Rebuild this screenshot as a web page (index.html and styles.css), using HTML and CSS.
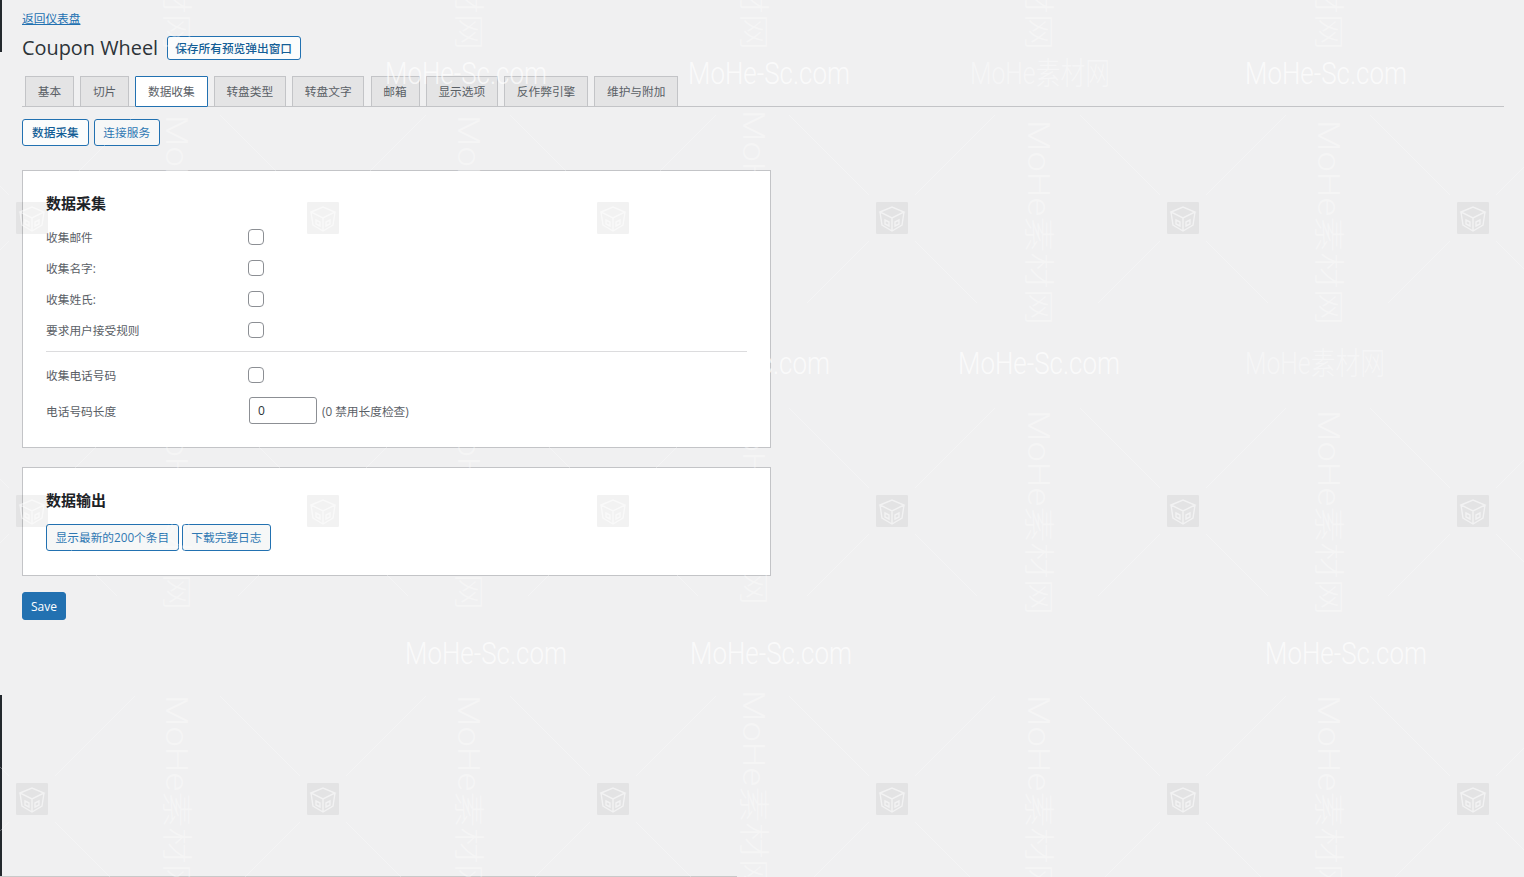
FILE: index.html
```html
<!DOCTYPE html>
<html lang="zh-CN">
<head>
<meta charset="utf-8">
<title>Coupon Wheel</title>
<link rel="stylesheet" href="styles.css">
</head>
<body>
<main class="page">
  <a class="back" href="#">返回仪表盘</a>
  <div class="title-row">
    <h1>Coupon Wheel</h1>
    <a class="btn btn-strong" href="#">保存所有预览弹出窗口</a>
  </div>
  <nav class="tabs">
    <a class="tab" href="#">基本</a>
    <a class="tab" href="#">切片</a>
    <a class="tab active" href="#">数据收集</a>
    <a class="tab" href="#">转盘类型</a>
    <a class="tab" href="#">转盘文字</a>
    <a class="tab" href="#">邮箱</a>
    <a class="tab" href="#">显示选项</a>
    <a class="tab" href="#">反作弊引擎</a>
    <a class="tab" href="#">维护与附加</a>
  </nav>
  <div class="subtabs">
    <a class="btn btn-strong" href="#">数据采集</a>
    <a class="btn" href="#">连接服务</a>
  </div>

  <section class="card card-collect">
    <h2>数据采集</h2>
    <div class="row"><label>收集邮件</label><input type="checkbox"></div>
    <div class="row"><label>收集名字:</label><input type="checkbox"></div>
    <div class="row"><label>收集姓氏:</label><input type="checkbox"></div>
    <div class="row"><label>要求用户接受规则</label><input type="checkbox"></div>
    <hr>
    <div class="row"><label>收集电话号码</label><input type="checkbox"></div>
    <div class="row row-input">
      <label>电话号码长度</label>
      <div class="field"><input class="num" type="text" value="0"><span class="hint">(0 禁用长度检查)</span></div>
    </div>
  </section>

  <section class="card card-output">
    <h2>数据输出</h2>
    <div class="actions">
      <a class="btn" href="#">显示最新的200个条目</a>
      <a class="btn" href="#">下载完整日志</a>
    </div>
  </section>

  <button class="save" type="button">Save</button>
</main>

<svg class="overlay" width="1524" height="877" viewBox="0 0 1524 877" aria-hidden="true">
  <defs>
    <g id="mark">
      <path class="diag" d="M23 -23L103 -103M-23 -23L-103 -103M23 23L85 85M-23 23L-85 85"/>
      <rect class="cube-bg" x="-16" y="-16" width="32" height="32" rx="1"/>
      <path class="cube-line" d="M-12 -6L0 -11L12 -6L0 0ZM-12 -6L-10 7L0 13L10 7L12 -6M0 0V13"/>
      <path class="cube-line" d="M-7 2L-3 4L-3 8L-7 6ZM7 2L3 4L3 8L7 6Z"/>
    </g>
  </defs>
  <rect class="edge" x="0" y="0" width="2" height="52"/>
  <rect class="edge" x="0" y="695" width="2" height="182"/>
  <rect class="floor" x="0" y="876" width="737" height="1"/>

  <use href="#mark" x="32" y="218"/><use href="#mark" x="323" y="218"/><use href="#mark" x="613" y="218"/>
  <use href="#mark" x="892" y="218"/><use href="#mark" x="1183" y="218"/><use href="#mark" x="1473" y="218"/>
  <use href="#mark" x="32" y="511"/><use href="#mark" x="323" y="511"/><use href="#mark" x="613" y="511"/>
  <use href="#mark" x="892" y="511"/><use href="#mark" x="1183" y="511"/><use href="#mark" x="1473" y="511"/>
  <use href="#mark" x="32" y="799"/><use href="#mark" x="323" y="799"/><use href="#mark" x="613" y="799"/>
  <use href="#mark" x="892" y="799"/><use href="#mark" x="1183" y="799"/><use href="#mark" x="1473" y="799"/>

  <text class="wm" x="385" y="84" textLength="162" lengthAdjust="spacingAndGlyphs">MoHe-Sc.com</text>
  <text class="wm" x="688" y="84" textLength="162" lengthAdjust="spacingAndGlyphs">MoHe-Sc.com</text>
  <text class="wm wm-soft" x="970" y="84" textLength="140" lengthAdjust="spacingAndGlyphs">MoHe素材网</text>
  <text class="wm" x="1245" y="84" textLength="162" lengthAdjust="spacingAndGlyphs">MoHe-Sc.com</text>
  <text class="wm" x="668" y="374" textLength="162" lengthAdjust="spacingAndGlyphs">MoHe-Sc.com</text>
  <text class="wm" x="958" y="374" textLength="162" lengthAdjust="spacingAndGlyphs">MoHe-Sc.com</text>
  <text class="wm wm-soft" x="1245" y="374" textLength="140" lengthAdjust="spacingAndGlyphs">MoHe素材网</text>
  <text class="wm" x="405" y="664" textLength="162" lengthAdjust="spacingAndGlyphs">MoHe-Sc.com</text>
  <text class="wm" x="690" y="664" textLength="162" lengthAdjust="spacingAndGlyphs">MoHe-Sc.com</text>
  <text class="wm" x="1265" y="664" textLength="162" lengthAdjust="spacingAndGlyphs">MoHe-Sc.com</text>

  <text class="wm wm-v" transform="translate(166 -155) rotate(90)" textLength="205" lengthAdjust="spacingAndGlyphs">MoHe素材网</text>
  <text class="wm wm-v" transform="translate(166 115) rotate(90)" textLength="205" lengthAdjust="spacingAndGlyphs">MoHe素材网</text>
  <text class="wm wm-v" transform="translate(166 405) rotate(90)" textLength="205" lengthAdjust="spacingAndGlyphs">MoHe素材网</text>
  <text class="wm wm-v" transform="translate(166 695) rotate(90)" textLength="205" lengthAdjust="spacingAndGlyphs">MoHe素材网</text>
  <text class="wm wm-v" transform="translate(458 -155) rotate(90)" textLength="205" lengthAdjust="spacingAndGlyphs">MoHe素材网</text>
  <text class="wm wm-v" transform="translate(458 115) rotate(90)" textLength="205" lengthAdjust="spacingAndGlyphs">MoHe素材网</text>
  <text class="wm wm-v" transform="translate(458 405) rotate(90)" textLength="205" lengthAdjust="spacingAndGlyphs">MoHe素材网</text>
  <text class="wm wm-v" transform="translate(458 695) rotate(90)" textLength="205" lengthAdjust="spacingAndGlyphs">MoHe素材网</text>
  <text class="wm wm-v" transform="translate(743 -155) rotate(90)" textLength="205" lengthAdjust="spacingAndGlyphs">MoHe素材网</text>
  <text class="wm wm-v" transform="translate(743 110) rotate(90)" textLength="205" lengthAdjust="spacingAndGlyphs">MoHe素材网</text>
  <text class="wm wm-v" transform="translate(743 400) rotate(90)" textLength="205" lengthAdjust="spacingAndGlyphs">MoHe素材网</text>
  <text class="wm wm-v" transform="translate(743 690) rotate(90)" textLength="205" lengthAdjust="spacingAndGlyphs">MoHe素材网</text>
  <text class="wm wm-v" transform="translate(1028 -155) rotate(90)" textLength="205" lengthAdjust="spacingAndGlyphs">MoHe素材网</text>
  <text class="wm wm-v" transform="translate(1028 120) rotate(90)" textLength="205" lengthAdjust="spacingAndGlyphs">MoHe素材网</text>
  <text class="wm wm-v" transform="translate(1028 410) rotate(90)" textLength="205" lengthAdjust="spacingAndGlyphs">MoHe素材网</text>
  <text class="wm wm-v" transform="translate(1028 695) rotate(90)" textLength="205" lengthAdjust="spacingAndGlyphs">MoHe素材网</text>
  <text class="wm wm-v" transform="translate(1318 -155) rotate(90)" textLength="205" lengthAdjust="spacingAndGlyphs">MoHe素材网</text>
  <text class="wm wm-v" transform="translate(1318 120) rotate(90)" textLength="205" lengthAdjust="spacingAndGlyphs">MoHe素材网</text>
  <text class="wm wm-v" transform="translate(1318 410) rotate(90)" textLength="205" lengthAdjust="spacingAndGlyphs">MoHe素材网</text>
  <text class="wm wm-v" transform="translate(1318 695) rotate(90)" textLength="205" lengthAdjust="spacingAndGlyphs">MoHe素材网</text>
</svg>
</body>
</html>
```
FILE: styles.css
```css
* { box-sizing: border-box; }

html, body { height: 100%; }

body {
  margin: 0;
  background: #f0f0f1;
  color: #5a6066;
  font-family: "Open Sans", "Noto Sans CJK SC", sans-serif;
  font-size: 11.7px;
  overflow: hidden;
}

.page {
  padding: 10px 20px 0 22px;
}

.back {
  display: block;
  height: 16px;
  line-height: 16px;
  color: #2271b1;
}

.title-row {
  display: flex;
  align-items: center;
  gap: 8.5px;
  margin-top: 10px;
  height: 24px;
}

h1 {
  margin: 0;
  font-size: 19.9px;
  font-weight: 400;
  line-height: 24px;
  color: #2c3338;
}

.btn {
  display: inline-flex;
  align-items: center;
  height: 27px;
  padding: 0 9px 2px;
  border: 1px solid #2271b1;
  border-radius: 3px;
  background: #f6f7f7;
  color: #2f78b3;
  white-space: nowrap;
  text-decoration: none;
}

.btn-strong {
  font-weight: 500;
  color: #135e96;
  background: #fbfcfc;
}

.title-row .btn {
  height: 24px;
  padding: 0 7.5px 2px;
}

.tabs {
  display: flex;
  gap: 6.1px;
  margin-top: 16px;
  height: 31px;
  padding-left: 3px;
  width: 1482px;
  border-bottom: 1px solid #c3c4c7;
}

.tab {
  display: flex;
  align-items: center;
  height: 31px;
  padding: 0 11.8px 2px;
  border: 1px solid #c3c4c7;
  background: #e4e4e5;
  color: #5a6066;
  text-decoration: none;
  white-space: nowrap;
}

.tab.active {
  background: #fff;
  border: 1px solid #2271b1;
  border-radius: 1px;
}

.subtabs {
  display: flex;
  gap: 5px;
  margin-top: 12px;
}

.subtabs .btn:last-child {
  padding: 0 8.6px 2px;
}

.card {
  width: 749px;
  padding: 0 23px;
  background: #fff;
  border: 1px solid #c3c4c7;
}

.card-collect {
  height: 278px;
  margin-top: 24px;
}

.card-output {
  height: 109px;
  margin-top: 19px;
}

h2 {
  margin: 21px 0 0;
  font-size: 15px;
  line-height: 22px;
  font-weight: 700;
  color: #1d2327;
}

.row {
  display: grid;
  grid-template-columns: 202px 1fr;
  align-items: center;
  height: 31px;
}

.card-collect h2 + .row {
  margin-top: 7px;
}

.row label {
  color: #5a6066;
}

input[type="checkbox"] {
  appearance: none;
  width: 16px;
  height: 16px;
  margin: 0;
  background: #fff;
  border: 1px solid #8c8f94;
  border-radius: 4px;
}

hr {
  height: 1px;
  margin: 6px 0 7px;
  border: 0;
  background: #dcdcde;
}

.row-input {
  height: 30px;
  margin-top: 5px;
}

.field {
  display: flex;
  align-items: center;
  gap: 5px;
  padding-left: 1px;
}

.num {
  width: 68px;
  height: 27px;
  padding: 0 8px;
  border: 1px solid #8c8f94;
  border-radius: 3px;
  background: #fff;
  color: #2c3338;
  font-family: inherit;
  font-size: 12px;
}

.actions {
  display: flex;
  gap: 3px;
  margin-top: 13px;
}

.actions .btn {
  padding: 0 8.6px 2px;
}

.save {
  display: block;
  width: 44px;
  height: 28px;
  margin-top: 16px;
  padding: 0;
  border: 1px solid #2271b1;
  border-radius: 3px;
  background: #2271b1;
  color: #fff;
  font-family: inherit;
  font-size: 12px;
}

.overlay {
  position: absolute;
  top: 0;
  left: 0;
  pointer-events: none;
}

.edge { fill: #23282d; }
.floor { fill: #c9c9c9; }

.diag {
  fill: none;
  stroke: #fff;
  stroke-opacity: .3;
  stroke-width: 1;
}

.cube-bg { fill: #000; fill-opacity: .05; }

.cube-line {
  fill: none;
  stroke: #fff;
  stroke-opacity: .55;
  stroke-width: 1.4;
}

.wm {
  fill: #fff;
  fill-opacity: .7;
  font-family: "Roboto", "Noto Sans CJK SC", sans-serif;
  font-weight: 300;
  font-size: 31px;
}

.wm-soft { fill-opacity: .4; }
.wm-v { fill-opacity: .35; }
```
